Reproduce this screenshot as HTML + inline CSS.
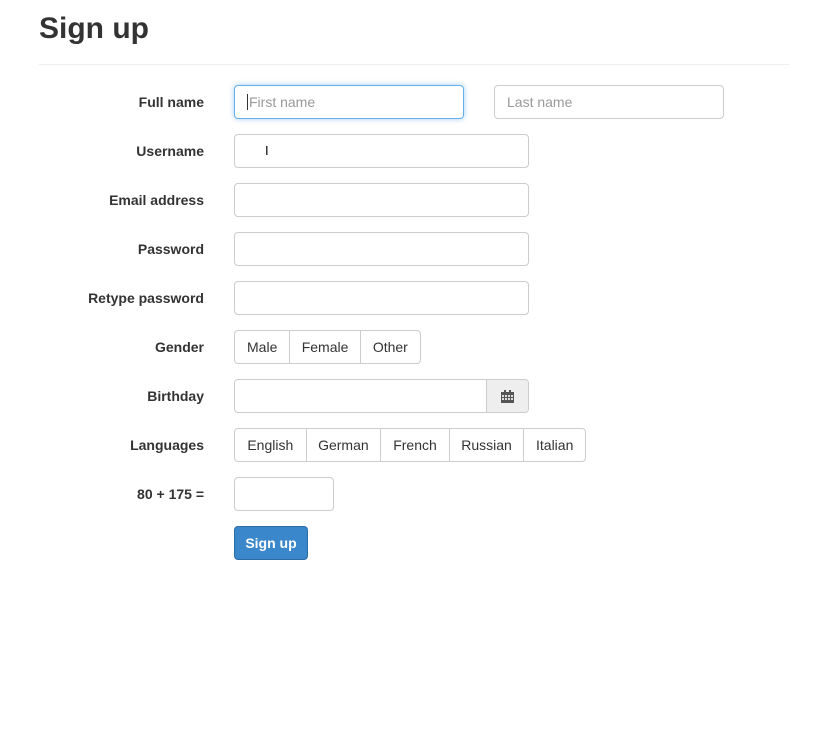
<!DOCTYPE html>
<html><head><style>
body{margin:0;background:#fff;font-family:"Liberation Sans",sans-serif;color:#333;width:825px;height:750px;position:relative;overflow:hidden}
h1{position:absolute;left:39px;top:9px;margin:0;font-size:30px;font-weight:bold;line-height:40px}
.hr{position:absolute;left:39px;width:750px;top:64px;border-top:1px solid #eee}
.l{position:absolute;right:621px;font-weight:bold;font-size:14px;line-height:34px;white-space:nowrap}
.i{position:absolute;box-sizing:border-box;height:34px;border:1px solid #ccc;border-radius:4px;background:#fff;font-size:14px;line-height:32px;padding-left:12px;color:#999}
.g{position:absolute;display:flex;height:34px;box-sizing:border-box;border:1px solid #ccc;border-radius:4px;overflow:hidden}
.g span{box-sizing:border-box;border-left:1px solid #ccc;font-size:14px;line-height:32px;text-align:center;color:#333}
.g span:first-child{border-left:0}
</style></head><body>
<h1>Sign up</h1><div class="hr"></div>
<div class="l" style="top:85px">Full name</div>
<div class="i" style="left:234px;top:85px;width:230px;border-color:#66afe9;box-shadow:0 0 6px rgba(102,175,233,.6)"><span style="border-left:1px solid #333;margin-right:1px"></span>First name</div>
<div class="i" style="left:494px;top:85px;width:230px">Last name</div>
<div class="l" style="top:134px">Username</div>
<div class="i" style="left:234px;top:134px;width:295px"><span style="position:absolute;left:30px;top:0;color:#000;font-size:13px">I</span></div>
<div class="l" style="top:183px">Email address</div>
<div class="i" style="left:234px;top:183px;width:295px"></div>
<div class="l" style="top:232px">Password</div>
<div class="i" style="left:234px;top:232px;width:295px"></div>
<div class="l" style="top:281px">Retype password</div>
<div class="i" style="left:234px;top:281px;width:295px"></div>
<div class="l" style="top:330px">Gender</div>
<div class="g" style="left:234px;top:330px;width:187px"><span style="width:55px">Male</span><span style="width:71px">Female</span><span style="width:61px">Other</span></div>
<div class="l" style="top:379px">Birthday</div>
<div class="g" style="left:234px;top:379px;width:295px"><span style="width:253px"></span><span style="width:42px;background:#eee;display:flex;align-items:center;justify-content:center"><svg width="13" height="13" viewBox="0 0 13 13"><rect x="0" y="2" width="13" height="11" fill="#555"/><rect x="3" y="0" width="2" height="3" fill="#555"/><rect x="8" y="0" width="2" height="3" fill="#555"/><g fill="#ddd"><rect x="1" y="5" width="2" height="2"/><rect x="4" y="5" width="2" height="2"/><rect x="7" y="5" width="2" height="2"/><rect x="10" y="5" width="2" height="2"/><rect x="1" y="8" width="2" height="2"/><rect x="4" y="8" width="2" height="2"/><rect x="7" y="8" width="2" height="2"/><rect x="10" y="8" width="2" height="2"/></g></svg></span></div>
<div class="l" style="top:428px">Languages</div>
<div class="g" style="left:234px;top:428px;width:352px"><span style="width:71px">English</span><span style="width:75px">German</span><span style="width:69px">French</span><span style="width:75px">Russian</span><span style="width:62px">Italian</span></div>
<div class="l" style="top:477px">80 + 175 =</div>
<div class="i" style="left:234px;top:477px;width:100px"></div>
<div style="position:absolute;left:234px;top:526px;width:74px;height:34px;box-sizing:border-box;background:#3a87cb;border:1px solid #2e6da4;border-radius:4px;color:#fff;font-size:14px;font-weight:bold;line-height:32px;text-align:center">Sign up</div>
</body></html>
